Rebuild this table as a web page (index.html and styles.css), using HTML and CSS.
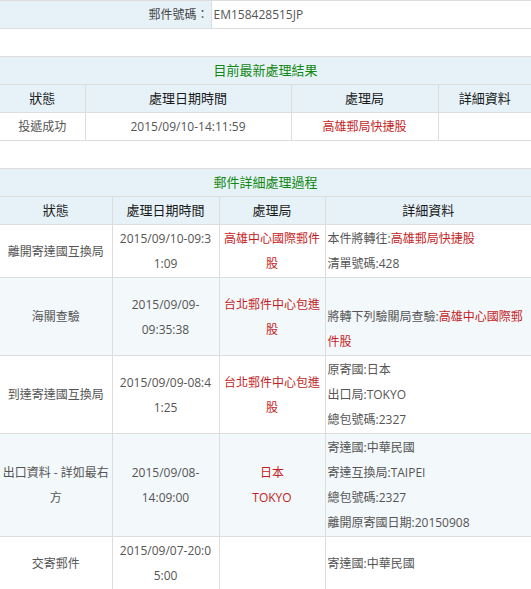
FILE: index.html
```html
<!DOCTYPE html>
<html lang="zh-Hant">
<head>
<meta charset="utf-8">
<title>郵件查詢</title>
<link rel="stylesheet" href="styles.css">
</head>
<body>
<table class="grid meta">
  <colgroup><col class="c-label"><col></colgroup>
  <tr>
    <th class="label">郵件號碼：</th>
    <td class="value">EM158428515JP</td>
  </tr>
</table>

<table class="grid latest">
  <colgroup><col class="l1"><col class="l2"><col class="l3"><col class="l4"></colgroup>
  <tr><th class="title" colspan="4">目前最新處理結果</th></tr>
  <tr class="head"><th>狀態</th><th>處理日期時間</th><th>處理局</th><th>詳細資料</th></tr>
  <tr>
    <td>投遞成功</td>
    <td>2015/09/10-14:11:59</td>
    <td class="red">高雄郵局快捷股</td>
    <td></td>
  </tr>
</table>

<table class="grid detail">
  <colgroup><col class="d1"><col class="d2"><col class="d3"><col class="d4"></colgroup>
  <tr><th class="title" colspan="4">郵件詳細處理過程</th></tr>
  <tr class="head"><th>狀態</th><th>處理日期時間</th><th>處理局</th><th>詳細資料</th></tr>
  <tr>
    <td>離開寄達國互換局</td>
    <td>2015/09/10-09:3<br>1:09</td>
    <td class="red">高雄中心國際郵件<br>股</td>
    <td class="info">本件將轉往:<span class="red">高雄郵局快捷股</span><br>清單號碼:428</td>
  </tr>
  <tr class="alt">
    <td>海關查驗</td>
    <td>2015/09/09-<br>09:35:38</td>
    <td class="red">台北郵件中心包進<br>股</td>
    <td class="info"><br>將轉下列驗關局查驗:<span class="red">高雄中心國際郵</span><br><span class="red">件股</span></td>
  </tr>
  <tr>
    <td>到達寄達國互換局</td>
    <td>2015/09/09-08:4<br>1:25</td>
    <td class="red">台北郵件中心包進<br>股</td>
    <td class="info">原寄國:日本<br>出口局:TOKYO<br>總包號碼:2327</td>
  </tr>
  <tr class="alt">
    <td>出口資料 - 詳如最右<br>方</td>
    <td>2015/09/08-<br>14:09:00</td>
    <td class="red">日本<br>TOKYO</td>
    <td class="info">寄達國:中華民國<br>寄達互換局:TAIPEI<br>總包號碼:2327<br>離開原寄國日期:20150908</td>
  </tr>
  <tr>
    <td>交寄郵件</td>
    <td>2015/09/07-20:0<br>5:00</td>
    <td></td>
    <td class="info">寄達國:中華民國</td>
  </tr>
</table>
</body>
</html>
```

FILE: styles.css
```css
html, body {
  margin: 0;
  padding: 0;
  background: #fff;
}

body {
  font-family: "Open Sans", "Noto Sans CJK TC", sans-serif;
  font-size: 12px;
  color: #555;
}

.grid {
  width: 100%;
  border-collapse: collapse;
  table-layout: fixed;
  margin: 0 0 27px 0;
}

.grid th,
.grid td {
  border: 1px solid #dddddd;
  padding: 1px 2px;
  line-height: 25px;
  text-align: center;
  vertical-align: middle;
  font-weight: normal;
  white-space: nowrap;
  overflow: hidden;
}

.grid tr > :first-child { border-left: none; }
.grid tr > :last-child { border-right: none; }

.c-label { width: 211px; }

.meta .label {
  background: #e6f2f8;
  text-align: right;
  color: #444;
  padding-right: 2px;
}

.meta .value {
  text-align: left;
  color: #555;
}

.title {
  background: #e6f2f8;
  color: #118811;
  font-size: 13px;
}

.head th {
  background: #e6f2f8;
  color: #1a1a1a;
  font-size: 13px;
}

.l1 { width: 85px; }
.l2 { width: 206px; }
.l3 { width: 147px; }

.d1 { width: 112px; }
.d2 { width: 107px; }
.d3 { width: 106px; }

.alt td { background: #f3f8fb; }

.red { color: #c41e24; }

.grid td.info { text-align: left; }
```
